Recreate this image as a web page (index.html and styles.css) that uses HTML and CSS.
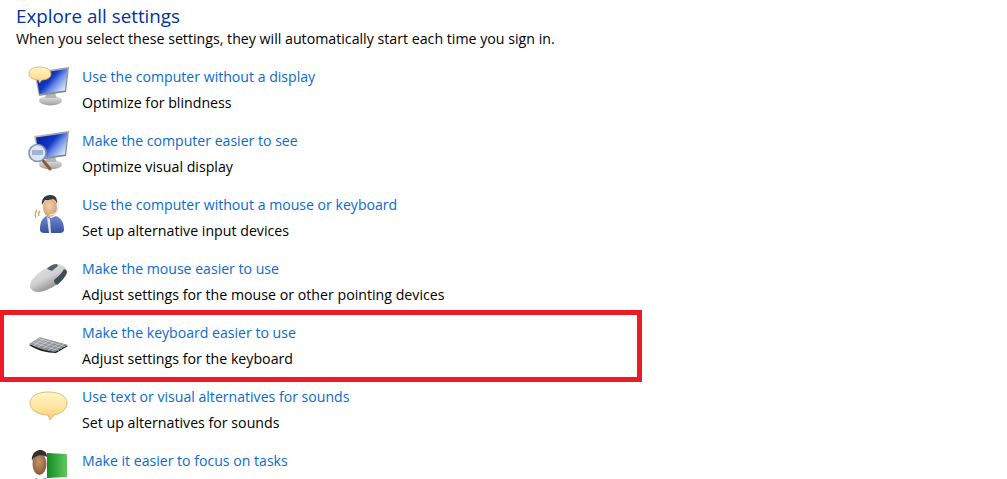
FILE: index.html
```html
<!DOCTYPE html>
<html lang="en">
<head>
  <meta charset="UTF-8" />
  <title>Explore all settings</title>
  <link rel="stylesheet" href="styles.css">
</head>
<body>
  <svg class="defs" width="0" height="0">
    <defs>
      <linearGradient id="screen" x1="0" y1="0" x2="1" y2=".7">
        <stop offset="0" stop-color="#071a94"/>
        <stop offset=".5" stop-color="#1238c4"/>
        <stop offset=".7" stop-color="#6f8fe4"/>
        <stop offset="1" stop-color="#dfe8fa"/>
      </linearGradient>
      <linearGradient id="bezel" x1="0" y1="0" x2="1" y2="1">
        <stop offset="0" stop-color="#c4c8ce"/>
        <stop offset="1" stop-color="#70757c"/>
      </linearGradient>
      <linearGradient id="stand" x1="0" y1="0" x2="0" y2="1">
        <stop offset="0" stop-color="#e8e8e8"/>
        <stop offset="1" stop-color="#a0a0a0"/>
      </linearGradient>
      <linearGradient id="bubble" x1="0" y1="0" x2="0" y2="1">
        <stop offset="0" stop-color="#fff6c8"/>
        <stop offset=".6" stop-color="#fde29a"/>
        <stop offset="1" stop-color="#f4cc76"/>
      </linearGradient>
      <linearGradient id="shirt" x1="0" y1="0" x2="0" y2="1">
        <stop offset="0" stop-color="#7088d0"/>
        <stop offset="1" stop-color="#38509c"/>
      </linearGradient>
      <radialGradient id="skin" cx=".45" cy=".4" r=".7">
        <stop offset="0" stop-color="#f6cfa8"/>
        <stop offset="1" stop-color="#cc9668"/>
      </radialGradient>
      <radialGradient id="skin2" cx=".45" cy=".4" r=".7">
        <stop offset="0" stop-color="#c99468"/>
        <stop offset="1" stop-color="#7c5234"/>
      </radialGradient>
      <linearGradient id="mouse" x1="0" y1="0" x2=".7" y2="1">
        <stop offset="0" stop-color="#ececec"/>
        <stop offset=".55" stop-color="#cfcfcf"/>
        <stop offset="1" stop-color="#757575"/>
      </linearGradient>
      <linearGradient id="keys" x1="0" y1="0" x2="1" y2="1">
        <stop offset="0" stop-color="#a8acb2"/>
        <stop offset="1" stop-color="#74787e"/>
      </linearGradient>
      <linearGradient id="book" x1="0" y1="0" x2="1" y2="0">
        <stop offset="0" stop-color="#128a22"/>
        <stop offset="1" stop-color="#62c860"/>
      </linearGradient>
      <g id="monitor">
        <ellipse cx="24.500" cy="36.500" rx="11.500" ry="5" fill="url(#stand)"/>
        <path d="M20 28h9l1.500 6h-11z" fill="#b4b4b4"/>
        <path d="M8 8 43 3l-3 25-27 4z" fill="url(#bezel)"/>
        <path d="M10 9.500 41.500 5 39 26.500 13.500 30z" fill="url(#screen)"/>
      </g>
    </defs>
  </svg>

  <h1 class="title">Explore all settings</h1>
  <p class="intro">When you select these settings, they will automatically start each time you sign in.</p>

  <ul class="settings">
    <li class="item">
      <svg class="icon" viewBox="0 0 48 48">
        <use href="#monitor"/>
        <path d="M13 3c6 0 12 2 12 7 0 4-5 6-9 6l-2.500 3-1-3C8 16 3 14 3 9.500 3 5 8 3 13 3z" fill="url(#bubble)" stroke="#c9a35c" stroke-width=".7"/>
      </svg>
      <div class="text">
        <a class="link" href="#">Use the computer without a display</a>
        <div class="desc">Optimize for blindness</div>
      </div>
    </li>
    <li class="item">
      <svg class="icon" viewBox="0 0 48 48">
        <use href="#monitor"/>
        <path d="M15 30 24 41" stroke="#8a5a3a" stroke-width="3" stroke-linecap="round"/>
        <circle cx="11.500" cy="25" r="8.500" fill="#dbe5f4" stroke="#7f93ad" stroke-width="1.600"/>
        <path d="M6 22h11v5H6z" fill="#9fb4d4"/>
      </svg>
      <div class="text">
        <a class="link" href="#">Make the computer easier to see</a>
        <div class="desc">Optimize visual display</div>
      </div>
    </li>
    <li class="item">
      <svg class="icon" viewBox="0 0 48 48">
        <path d="M14 38c0-8 2-12 7-14l4 2 5-2c5 2 8 6 8 14 0 2-2 3-4 3H18c-2 0-4-1-4-3z" fill="url(#shirt)"/>
        <path d="M21 25l2 16h2l-1-14z" fill="#dfe8f6"/>
        <ellipse cx="24" cy="15.500" rx="7" ry="9.500" fill="url(#skin)"/>
        <path d="M16 13c-1-6 3-10 8-10 5 0 8 3 7 9-1-3-2-4-4-5-3 1-6 1-8 1-1 2-2 3-3 5z" fill="#34393c"/>
        <path d="M31 7c2 5 2 9 0 13-2 2-5 3-8 3" fill="none" stroke="#e4e7ea" stroke-width="1.200"/>
        <path d="M14 19c-1 1-2 3-1 5M11 18c-2 2-2 6-1 8" fill="none" stroke="#e8903a" stroke-width="1.100"/>
      </svg>
      <div class="text">
        <a class="link" href="#">Use the computer without a mouse or keyboard</a>
        <div class="desc">Set up alternative input devices</div>
      </div>
    </li>
    <li class="item">
      <svg class="icon" viewBox="0 0 48 48">
        <path d="M4 31c-1-5 5-12 13-17 5-3 10-6 14-6 4 0 9 3 10 7 0 5-6 11-14 16-6 3-11 5-15 5-4 0-7-2-8-5z" fill="url(#mouse)"/>
        <path d="M28 24c4-3 8-7 10-11 2 1 3 2 3 3-1 4-5 9-10 13-2-1-3-3-3-5z" fill="#3f4a5c"/>
        <path d="M21 13c2-3 6-5 10-5l1 2-6 5z" fill="#59606a"/>
      </svg>
      <div class="text">
        <a class="link" href="#">Make the mouse easier to use</a>
        <div class="desc">Adjust settings for the mouse or other pointing devices</div>
      </div>
    </li>
    <li class="item">
      <svg class="icon" viewBox="0 0 48 48">
        <path d="M3 25 15 20l27 6-12 7c-9 0-20-3-27-8z" fill="#1c1e22"/>
        <path d="M3 24 14 17l28 8-13 7c-8-1-18-4-26-8z" fill="url(#keys)"/>
        <path d="M8 25.500 19 18.500M12 27 24 20M17 28.500l12-7M22 30l12-7M26 31l12-7M7 22.500l26 8M10 20.500l26 8M13 18.500l26 8" stroke="#e4e6e8" stroke-width=".5" fill="none"/>
      </svg>
      <div class="text">
        <a class="link" href="#">Make the keyboard easier to use</a>
        <div class="desc">Adjust settings for the keyboard</div>
      </div>
    </li>
    <li class="item">
      <svg class="icon" viewBox="0 0 48 48">
        <path d="M22.500 8C33 8 41 12 41 19s-7 11-13 12l-4 5-2-5C12 31 4 26 4 19S12 8 22.500 8z" fill="url(#bubble)" stroke="#d0ac64" stroke-width=".8"/>
      </svg>
      <div class="text">
        <a class="link" href="#">Use text or visual alternatives for sounds</a>
        <div class="desc">Set up alternatives for sounds</div>
      </div>
    </li>
    <li class="item">
      <svg class="icon" viewBox="0 0 48 48">
        <path d="M21 5l19 1c1 0 1 1 1 2v21l-20 1z" fill="url(#book)"/>
        <path d="M4 44c0-8 2-12 6-14l4 2 5-2c5 2 10 6 10 14z" fill="#6f9bc8"/>
        <ellipse cx="13.500" cy="16" rx="7" ry="11" fill="url(#skin2)"/>
        <path d="M6 13c-1-6 3-11 8-11 4 0 7 2 7 7-3-2-8-2-10-1-2 1-4 2-5 5z" fill="#33302c"/>
      </svg>
      <div class="text">
        <a class="link" href="#">Make it easier to focus on tasks</a>
      </div>
    </li>
  </ul>

  <div class="highlight"></div>
</body>
</html>
```

FILE: styles.css
```css
html, body {
  height: 100%;
  overflow: hidden;
}
body {
  margin: 0;
  padding: 4px 16px 0;
  box-sizing: border-box;
  background: #fff;
  color: #000;
  font-family: "Open Sans", "Noto Sans", sans-serif;
  font-size: 14.2px;
  position: relative;
}
.defs { position: absolute; }
.title {
  margin: 0;
  font-size: 18.8px;
  font-weight: 400;
  line-height: 25px;
  color: #003399;
}
.intro {
  margin: 0;
  line-height: 20px;
}
.settings {
  list-style: none;
  margin: 15px 0 0;
  padding: 0 0 0 10px;
}
.item {
  display: flex;
  align-items: flex-start;
  gap: 8px;
  height: 64px;
}
.icon {
  width: 48px;
  height: 48px;
  flex: none;
}
.link {
  display: block;
  font-size: 14.1px;
  line-height: 26px;
  color: #0a6ad0;
  text-decoration: none;
}
.desc { line-height: 26px; }
.highlight {
  position: absolute;
  left: -1px;
  top: 310px;
  width: 643px;
  height: 72px;
  box-sizing: border-box;
  border: 5px solid #ed1c24;
}
```
